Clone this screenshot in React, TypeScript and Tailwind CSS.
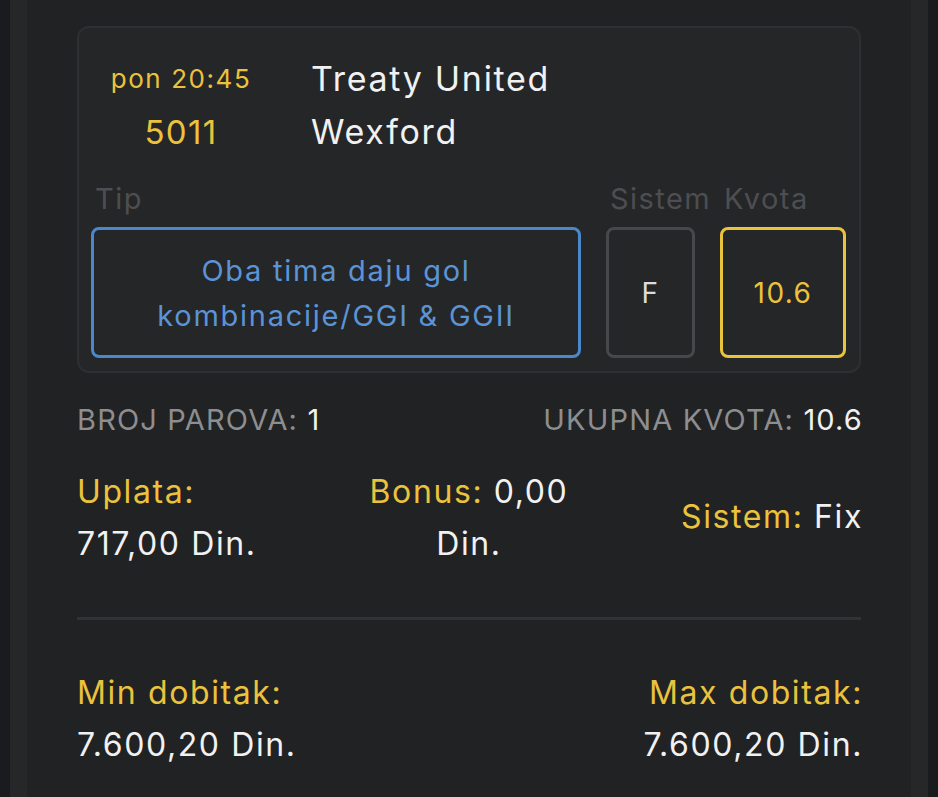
// Ticket summary: one pick card, then totals, stake and min/max payout.
const font = { fontFamily: "Inter, 'Noto Sans', sans-serif" };

function Pick() {
  return (
    <div className="rounded-[12px] border-2 border-[#2e2f32] bg-[#252628] px-[12px] pb-[13px] pt-[26px]">
      <div className="flex">
        <div className="flex w-[180px] flex-col items-center text-[#ebc23c]">
          <span className="text-[26px] leading-[50px] tracking-[0.06em]">pon 20:45</span>
          <span className="text-[33px] leading-[56px] tracking-[0.04em]">5011</span>
        </div>
        <div className="ml-[40px] flex flex-col text-[#f1f1f1]">
          <span className="text-[34px] leading-[50px] tracking-[0.05em]">Treaty United</span>
          <span className="text-[34px] leading-[56px] tracking-[0.05em]">Wexford</span>
        </div>
      </div>
      <div className="mt-[22px] grid grid-cols-[490px_89px_126px] gap-x-[25px] text-[29px] tracking-[0.05em]">
        <span className="pl-[4px] leading-[34px] text-[#4d4e51]">Tip</span>
        <span className="whitespace-nowrap pl-[4px] leading-[34px] text-[#4d4e51]">Sistem</span>
        <span className="pl-[4px] leading-[34px] text-[#4d4e51]">Kvota</span>
        <div className="mt-[11px] flex h-[131px] flex-col items-center justify-center rounded-[8px] border-[3px] border-[#4a88cc] text-center leading-[45px] tracking-[0.06em] text-[#5b94d6]">
          <span>Oba tima daju gol</span>
          <span>kombinacije/GGI &amp; GGII</span>
        </div>
        <div className="mt-[11px] flex h-[131px] items-center justify-center rounded-[8px] border-[3px] border-[#47484b] text-[28px] text-[#dcdcdc]">
          F
        </div>
        <div className="mt-[11px] flex h-[131px] items-center justify-center rounded-[8px] border-[3px] border-[#ebc23c] text-[28px] text-[#ebc23c]">
          10.6
        </div>
      </div>
    </div>
  );
}

export default function App() {
  return (
    <div className="min-h-[797px] bg-[#1a1b1e] px-[10px]" style={font}>
      <div className="min-h-[797px] bg-[#262729] px-[17px]">
        <div className="min-h-[797px] bg-[#212224] px-[50px] pt-[26px]">
          <Pick />

          <div className="mt-[30px] flex justify-between text-[29px] leading-[34px] tracking-[0.04em]">
            <span className="text-[#8d8e90]">
              BROJ PAROVA: <span className="text-[#f1f1f1]">1</span>
            </span>
            <span className="-mr-[2px] text-[#8d8e90]">
              UKUPNA KVOTA: <span className="text-[#f1f1f1]">10.6</span>
            </span>
          </div>

          <div className="mt-[29px] grid grid-cols-[1fr_auto_1fr] items-center text-[32px] leading-[52px] tracking-[0.05em]">
            <div className="flex flex-col">
              <span className="text-[#ebc23c]">Uplata:</span>
              <span className="text-[#f1f1f1]">717,00 Din.</span>
            </div>
            <p className="w-[215px] text-center text-[#f1f1f1]">
              <span className="text-[#ebc23c]">Bonus:</span> 0,00 Din.
            </p>
            <div className="-mr-[2px] -mt-[2px] text-right">
              <span className="text-[#ebc23c]">Sistem:</span> <span className="text-[#f1f1f1]">Fix</span>
            </div>
          </div>

          <div className="mt-[47px] h-[3px] bg-[#313235]" />

          <div className="mt-[47px] flex justify-between text-[32px] leading-[52px] tracking-[0.05em]">
            <div className="flex flex-col">
              <span className="text-[#ebc23c]">Min dobitak:</span>
              <span className="text-[#f1f1f1]">7.600,20 Din.</span>
            </div>
            <div className="-mr-[2px] flex flex-col items-end">
              <span className="text-[#ebc23c]">Max dobitak:</span>
              <span className="text-[#f1f1f1]">7.600,20 Din.</span>
            </div>
          </div>
        </div>
      </div>
    </div>
  );
}
